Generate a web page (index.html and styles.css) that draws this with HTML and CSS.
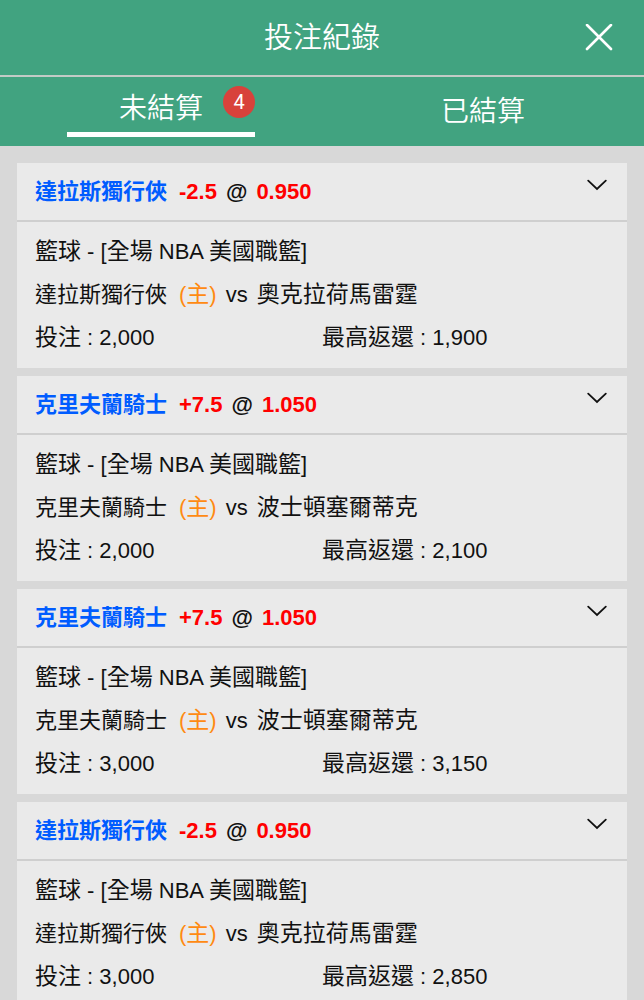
FILE: index.html
```html
<!DOCTYPE html>
<html lang="zh-Hant">
<head>
<meta charset="utf-8">
<meta name="viewport" content="width=device-width, initial-scale=1">
<title>投注紀錄</title>
<link rel="stylesheet" href="styles.css">
</head>
<body>
<header class="topbar">
  <h1 class="topbar-title">投注紀錄</h1>
  <button class="close" type="button" aria-label="關閉">
    <svg width="28" height="28" viewBox="0 0 28 28" fill="none" stroke="currentColor" stroke-width="2.6" stroke-linecap="round" aria-hidden="true"><path d="M2 1L26 25M26 1L2 25"/></svg>
  </button>
</header>
<nav class="tabs">
  <a class="tab" href="#open" aria-current="page"><span class="tab-label tab-label-active">未結算<span class="badge">4</span></span></a>
  <a class="tab" href="#settled"><span class="tab-label">已結算</span></a>
</nav>
<main class="bets" id="open">
  <article class="bet">
    <header class="bet-head">
      <h2 class="pick"><span class="team">達拉斯獨行俠</span><span class="odds">-2.5</span><span>@</span><span class="odds">0.950</span></h2>
      <button class="toggle" type="button" aria-label="收合"><svg width="20" height="12" viewBox="0 0 20 12" fill="none" stroke="currentColor" stroke-width="1.8" stroke-linecap="round" aria-hidden="true"><path d="M1.2 1.6L10 10L18.8 1.6"/></svg></button>
    </header>
    <div class="bet-body">
      <p><span class="zh">籃球</span> - [<span class="zh">全場</span> NBA <span class="zh">美國職籃</span>]</p>
      <p class="match"><span class="home-team">達拉斯獨行俠</span><span class="home">(<span class="zh">主</span>)</span><span>vs</span><span class="zh">奧克拉荷馬雷霆</span></p>
      <p class="amounts"><span><span class="zh">投注</span> : 2,000</span><span><span class="zh">最高返還</span> : 1,900</span></p>
    </div>
  </article>
  <article class="bet">
    <header class="bet-head">
      <h2 class="pick"><span class="team">克里夫蘭騎士</span><span class="odds">+7.5</span><span>@</span><span class="odds">1.050</span></h2>
      <button class="toggle" type="button" aria-label="收合"><svg width="20" height="12" viewBox="0 0 20 12" fill="none" stroke="currentColor" stroke-width="1.8" stroke-linecap="round" aria-hidden="true"><path d="M1.2 1.6L10 10L18.8 1.6"/></svg></button>
    </header>
    <div class="bet-body">
      <p><span class="zh">籃球</span> - [<span class="zh">全場</span> NBA <span class="zh">美國職籃</span>]</p>
      <p class="match"><span class="home-team">克里夫蘭騎士</span><span class="home">(<span class="zh">主</span>)</span><span>vs</span><span class="zh">波士頓塞爾蒂克</span></p>
      <p class="amounts"><span><span class="zh">投注</span> : 2,000</span><span><span class="zh">最高返還</span> : 2,100</span></p>
    </div>
  </article>
  <article class="bet">
    <header class="bet-head">
      <h2 class="pick"><span class="team">克里夫蘭騎士</span><span class="odds">+7.5</span><span>@</span><span class="odds">1.050</span></h2>
      <button class="toggle" type="button" aria-label="收合"><svg width="20" height="12" viewBox="0 0 20 12" fill="none" stroke="currentColor" stroke-width="1.8" stroke-linecap="round" aria-hidden="true"><path d="M1.2 1.6L10 10L18.8 1.6"/></svg></button>
    </header>
    <div class="bet-body">
      <p><span class="zh">籃球</span> - [<span class="zh">全場</span> NBA <span class="zh">美國職籃</span>]</p>
      <p class="match"><span class="home-team">克里夫蘭騎士</span><span class="home">(<span class="zh">主</span>)</span><span>vs</span><span class="zh">波士頓塞爾蒂克</span></p>
      <p class="amounts"><span><span class="zh">投注</span> : 3,000</span><span><span class="zh">最高返還</span> : 3,150</span></p>
    </div>
  </article>
  <article class="bet">
    <header class="bet-head">
      <h2 class="pick"><span class="team">達拉斯獨行俠</span><span class="odds">-2.5</span><span>@</span><span class="odds">0.950</span></h2>
      <button class="toggle" type="button" aria-label="收合"><svg width="20" height="12" viewBox="0 0 20 12" fill="none" stroke="currentColor" stroke-width="1.8" stroke-linecap="round" aria-hidden="true"><path d="M1.2 1.6L10 10L18.8 1.6"/></svg></button>
    </header>
    <div class="bet-body">
      <p><span class="zh">籃球</span> - [<span class="zh">全場</span> NBA <span class="zh">美國職籃</span>]</p>
      <p class="match"><span class="home-team">達拉斯獨行俠</span><span class="home">(<span class="zh">主</span>)</span><span>vs</span><span class="zh">奧克拉荷馬雷霆</span></p>
      <p class="amounts"><span><span class="zh">投注</span> : 3,000</span><span><span class="zh">最高返還</span> : 2,850</span></p>
    </div>
  </article>
</main>
</body>
</html>
```
FILE: styles.css
```css
* {
  box-sizing: border-box;
}

body {
  margin: 0;
  background: #d8d8d8;
  color: #111;
  font-family: "Liberation Sans", "Noto Sans CJK TC", sans-serif;
  font-size: 22px;
}

h1, h2, p {
  margin: 0;
}

button {
  display: flex;
  padding: 0;
  border: 0;
  background: none;
  color: inherit;
  cursor: pointer;
}

.zh {
  font-size: 23px;
}

.topbar {
  display: grid;
  grid-template-columns: 1fr auto 1fr;
  align-items: center;
  padding: 16px 31px 15px;
  border-bottom: 2px solid #c2cbc6;
  background: #41a380;
  color: #fff;
}

.topbar-title {
  grid-column: 2;
  font-size: 29px;
  font-weight: 350;
  line-height: 44px;
}

.close {
  justify-self: end;
}

.tabs {
  display: flex;
  background: #41a380;
}

.tab {
  display: flex;
  flex: 1;
  align-items: center;
  justify-content: center;
  padding: 9px 0;
  color: #fff;
  font-size: 28px;
  font-weight: 350;
  text-decoration: none;
}

.tab-label {
  position: relative;
  width: 188px;
  line-height: 46px;
  text-align: center;
}

.tab-label-active {
  border-bottom: 5px solid #fff;
}

.badge {
  position: absolute;
  top: 0;
  right: 0;
  width: 32px;
  border-radius: 16px;
  background: #d8423b;
  font-family: Roboto, sans-serif;
  font-size: 20px;
  font-weight: 400;
  line-height: 32px;
}

.bets {
  display: flex;
  flex-direction: column;
  gap: 8px;
  padding: 17px;
}

.bet {
  background: #eaeaea;
}

.bet-head {
  display: flex;
  align-items: flex-start;
  justify-content: space-between;
  padding: 16px 20px 15px 18px;
  border-bottom: 2px solid #cfcfcf;
}

.pick, .match {
  display: flex;
  gap: 9px;
}

.pick {
  font-size: 22px;
  font-weight: 700;
  line-height: 26px;
}

.team, .home-team {
  min-width: 135px;
}

.team {
  color: #005cff;
}

.odds {
  color: #f00;
}

.bet-body {
  padding: 8px 18px 9px;
  line-height: 43px;
}

.home {
  color: #ff8a12;
}

.amounts {
  display: grid;
  grid-template-columns: 1fr 1fr;
}
```
